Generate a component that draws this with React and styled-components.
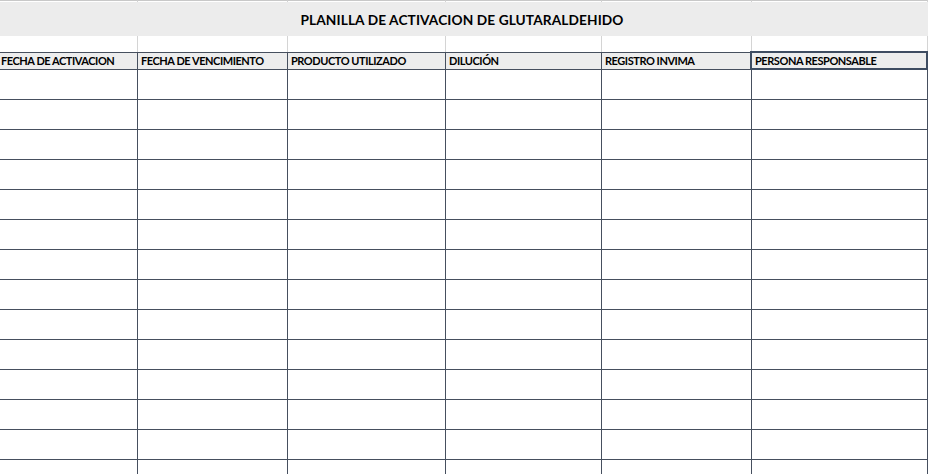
import React from "react";
import styled, { createGlobalStyle } from "styled-components";

const GlobalStyle = createGlobalStyle`
  html, body {
    margin: 0;
    padding: 0;
    background: #ffffff;
    overflow: hidden;
  }
  body {
    font-family: Lato, "Open Sans", "Liberation Sans", sans-serif;
    color: #000;
  }
`;

const COLUMNS = "140px 150px 158px 156px 150px 176px";

const Sheet = styled.div`
  width: 930px;
  margin-left: -2px;
  display: flex;
  flex-direction: column;
`;

const Row = styled.div`
  box-sizing: border-box;
  display: grid;
  grid-template-columns: ${COLUMNS};
  height: ${(p) => p.$height}px;
`;

const GridCell = styled.div`
  box-sizing: border-box;
  border-right: 1px solid #d4d4d4;
  border-top: ${(p) => (p.$top ? "1px solid #c8c8c8" : "none")};
`;

const TitleBand = styled.div`
  height: 34px;
  background: #ececec;
  display: flex;
  align-items: center;
  justify-content: center;
  padding-right: 2px;
  font-weight: 700;
  font-size: 13.7px;
  letter-spacing: 0.1px;
`;

const HeaderRow = styled(Row)`
  border-top: 1px solid #464f5e;
  border-bottom: 1px solid #464f5e;
  background: #ededed;
`;

const HeaderCell = styled.div`
  position: relative;
  box-sizing: border-box;
  border-right: 1px solid #464f5e;
  padding-left: 3px;
  font-size: 11px;
  font-weight: 700;
  line-height: 16px;
  white-space: nowrap;
  overflow: hidden;
  letter-spacing: -0.45px;

  ${(p) =>
    p.$selected &&
    `
    overflow: visible;
    &::after {
      content: "";
      position: absolute;
      left: -2px;
      top: -2px;
      right: -1px;
      bottom: -1px;
      border: 2px solid #3e4c61;
      pointer-events: none;
    }
  `}
`;

const DataRow = styled(Row)`
  border-bottom: 1px solid #464f5e;
`;

const DataCell = styled.div`
  box-sizing: border-box;
  border-right: 1px solid #464f5e;
`;

const headers = [
  "FECHA DE ACTIVACION",
  "FECHA DE VENCIMIENTO",
  "PRODUCTO UTILIZADO",
  "DILUCIÓN",
  "REGISTRO INVIMA",
  "PERSONA RESPONSABLE",
];

function PlanillaGlutaraldehido() {
  const rows = Array.from({ length: 14 }, (_, i) => i);

  return (
    <>
      <GlobalStyle />
      <Sheet>
        <Row $height={2}>
          {headers.map((h) => (
            <GridCell key={h} $top />
          ))}
        </Row>
        <TitleBand>PLANILLA DE ACTIVACION DE GLUTARALDEHIDO</TitleBand>
        <Row $height={16}>
          {headers.map((h) => (
            <GridCell key={h} />
          ))}
        </Row>
        <HeaderRow $height={18}>
          {headers.map((h, i) => (
            <HeaderCell key={h} $selected={i === headers.length - 1}>
              {h}
            </HeaderCell>
          ))}
        </HeaderRow>
        {rows.map((r) => (
          <DataRow key={r} $height={30}>
            {headers.map((h) => (
              <DataCell key={h} />
            ))}
          </DataRow>
        ))}
      </Sheet>
    </>
  );
}

export default PlanillaGlutaraldehido;
